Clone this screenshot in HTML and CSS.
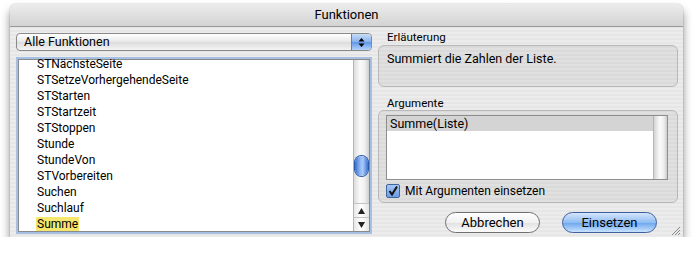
FILE: index.html
```html
<!DOCTYPE html>
<html lang="de">
<head>
    <meta charset="UTF-8">
    <title>Funktionen</title>
    <link rel="stylesheet" href="styles.css">
</head>
<body>
    <div class="window">
        <div class="titlebar">Funktionen</div>
        <div class="content">
            <div class="left">
                <div class="popup">
                    <span class="popup-label">Alle Funktionen</span>
                    <span class="popup-cap">
                        <svg width="7" height="11" viewBox="0 0 7 11"><path d="M3.5 1 L6.5 4.5 L0.5 4.5 Z M3.5 10 L6.5 6.5 L0.5 6.5 Z" fill="#000"/></svg>
                    </span>
                </div>
                <div class="list">
                    <div class="rows">
                        <div class="row">STNächsteSeite</div>
                        <div class="row">STSetzeVorhergehendeSeite</div>
                        <div class="row">STStarten</div>
                        <div class="row">STStartzeit</div>
                        <div class="row">STStoppen</div>
                        <div class="row">Stunde</div>
                        <div class="row">StundeVon</div>
                        <div class="row">STVorbereiten</div>
                        <div class="row">Suchen</div>
                        <div class="row">Suchlauf</div>
                        <div class="row"><span class="hit">Summe</span></div>
                    </div>
                    <div class="scrollbar">
                        <div class="track">
                            <div class="thumb"></div>
                        </div>
                        <div class="arrow">
                            <svg width="7" height="6" viewBox="0 0 7 6"><path d="M3.5 0 L7 6 L0 6 Z" fill="#222"/></svg>
                        </div>
                        <div class="arrow">
                            <svg width="7" height="6" viewBox="0 0 7 6"><path d="M0 0 L7 0 L3.5 6 Z" fill="#222"/></svg>
                        </div>
                    </div>
                </div>
            </div>
            <div class="right">
                <div class="group-label">Erläuterung</div>
                <div class="group desc">Summiert die Zahlen der Liste.</div>
                <div class="group-label args-label">Argumente</div>
                <div class="group args">
                    <div class="args-list">
                        <div class="args-rows">
                            <div class="args-row">Summe(Liste)</div>
                        </div>
                        <div class="args-scroll"></div>
                    </div>
                    <label class="check">
                        <span class="box">
                            <svg width="12" height="12" viewBox="0 0 12 12"><path d="M2.5 6 L5 9.5 L10 1.5" stroke="#111" stroke-width="2" fill="none"/></svg>
                        </span>
                        Mit Argumenten einsetzen
                    </label>
                </div>
                <div class="buttons">
                    <div class="btn">Abbrechen</div>
                    <div class="btn default">Einsetzen</div>
                </div>
            </div>
        </div>
        <div class="grip">
            <svg width="11" height="11" viewBox="0 0 11 11"><path d="M10 2 L2 10 M10 5 L5 10 M10 8 L8 10" stroke="#888" stroke-width="1"/></svg>
        </div>
    </div>
</body>
</html>
```
FILE: styles.css
```css
body {
    margin: 0;
    background: #fff;
    font-family: Roboto, 'Liberation Sans', sans-serif;
    font-size: 12.5px;
    color: #000;
}
.window {
    position: relative;
    margin: 4px 0 0 10px;
    width: 673px;
    height: 233px;
    border-radius: 6px 6px 0 0;
    background: repeating-linear-gradient(#ececec 0, #ececec 2px, #e6e6e6 2px, #e6e6e6 4px);
    box-shadow: 0 6px 10px rgba(0, 0, 0, 0.45), 0 0 1px rgba(0, 0, 0, 0.5);
    overflow: hidden;
}
.titlebar {
    height: 22px;
    line-height: 22px;
    text-align: center;
    font-size: 13px;
    background: linear-gradient(#ececec, #d3d3d3);
    border-bottom: 1px solid #999;
}
.content {
    display: flex;
    padding: 0 5px 0 6px;
    gap: 6px;
}
.left {
    width: 356px;
    padding-top: 6px;
    display: flex;
    flex-direction: column;
    gap: 6px;
}
.popup {
    height: 16px;
    display: flex;
    border: 1px solid #8a8a8a;
    border-radius: 4px;
    background: linear-gradient(#ffffff, #e8e8e8 50%, #dcdcdc 51%, #f4f4f4);
    overflow: hidden;
}
.popup-label {
    flex: 1;
    padding-left: 7px;
    line-height: 16px;
}
.popup-cap {
    width: 19px;
    display: flex;
    align-items: center;
    justify-content: center;
    border-left: 1px solid #5a7fbf;
    background: linear-gradient(#c9ddf7, #86b2ee 50%, #5e95e5 51%, #b4d3fb);
}
.list {
    height: 173px;
    display: flex;
    background: #fff;
    border: 2px solid #a6c0e3;
    box-shadow: inset 0 0 0 1px #8a8a8a;
    overflow: hidden;
}
.rows {
    flex: 1;
    margin-top: -3px;
    padding-left: 19px;
    font-size: 12px;
}
.row {
    height: 16px;
    line-height: 16px;
}
.hit {
    background: #f5e66e;
    padding: 0 1px;
    margin-left: -1px;
}
.scrollbar {
    width: 15px;
    display: flex;
    flex-direction: column;
    border-left: 1px solid #b5b5b5;
    margin: 1px 1px 1px 0;
}
.track {
    flex: 1;
    padding-top: 96px;
    background: linear-gradient(90deg, #dcdcdc, #fafafa 40%, #f0f0f0 70%, #cfcfcf);
}
.thumb {
    width: 13px;
    height: 20px;
    margin-left: 1px;
    border-radius: 7px;
    background: linear-gradient(90deg, #3a6fd0, #8fb8f3 40%, #a9cbf8 60%, #3b70d2);
    box-shadow: 0 0 0 1px #2c58a8;
}
.arrow {
    height: 13px;
    display: flex;
    align-items: center;
    justify-content: center;
    border-top: 1px solid #c4c4c4;
    background: linear-gradient(90deg, #e8e8e8, #ffffff 50%, #e4e4e4);
}
.right {
    width: 300px;
    padding-top: 3px;
    display: flex;
    flex-direction: column;
}
.group-label {
    font-size: 11.5px;
    padding-left: 9px;
    height: 14px;
    line-height: 14px;
}
.group {
    border: 1px solid #b8b8b8;
    border-radius: 6px;
    background: rgba(0, 0, 0, 0.05);
}
.desc {
    margin-top: 1px;
    padding: 5px 8px 0;
    box-sizing: border-box;
    height: 42px;
    line-height: 15px;
}
.args-label {
    margin-top: 9px;
}
.args {
    height: 93px;
    box-sizing: border-box;
    padding: 4px 9px 0 7px;
}
.args-list {
    height: 63px;
    display: flex;
    background: #fff;
    border: 1px solid #8e8e8e;
}
.args-rows {
    flex: 1;
}
.args-row {
    height: 15px;
    line-height: 15px;
    padding-left: 3px;
    background: #d4d4d4;
}
.args-scroll {
    width: 13px;
    border-left: 1px solid #b5b5b5;
    background: linear-gradient(90deg, #d4d4d4, #fbfbfb 45%, #eeeeee 75%, #cdcdcd);
}
.check {
    display: flex;
    align-items: center;
    gap: 5px;
    margin-top: 4px;
    font-size: 12px;
}
.box {
    width: 12px;
    height: 12px;
    border: 1px solid #40659e;
    border-radius: 2px;
    background: linear-gradient(#a8c8f2, #6b9be3);
    display: flex;
}
.buttons {
    display: flex;
    justify-content: flex-end;
    gap: 22px;
    padding-right: 21px;
    margin-top: 9px;
}
.btn {
    width: 93px;
    height: 19px;
    line-height: 19px;
    text-align: center;
    font-size: 13px;
    border: 1px solid #6f6f6f;
    border-radius: 11px;
    background: linear-gradient(#ffffff, #f0f0f0 50%, #e0e0e0 51%, #fbfbfb);
}
.btn.default {
    border-color: #3d5f9e;
    background: linear-gradient(#d5e6fb, #8fbdf3 50%, #6aa5ee 51%, #c8e2ff);
}
.grip {
    position: absolute;
    right: 2px;
    bottom: 2px;
    width: 11px;
    height: 11px;
}
```
